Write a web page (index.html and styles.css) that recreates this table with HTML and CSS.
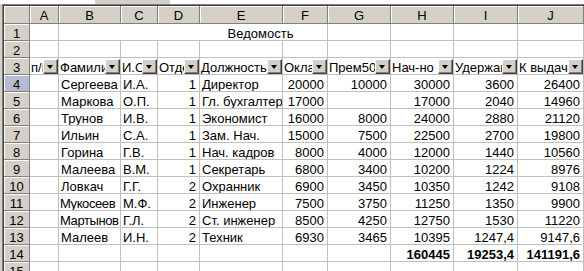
FILE: index.html
```html
<!DOCTYPE html>
<html lang="ru">
<head>
<meta charset="utf-8">
<title>Ведомость</title>
<link rel="stylesheet" href="styles.css">
</head>
<body>
<div class="topbar"><div class="tb-a"></div><div class="tb-b"></div><div class="tb-c"></div></div>
<div class="frame">
<div class="sheet">
  <div class="c hd corner"></div>
  <div class="c hd">A</div><div class="c hd">B</div><div class="c hd">C</div><div class="c hd">D</div><div class="c hd">E</div><div class="c hd">F</div><div class="c hd">G</div><div class="c hd">H</div><div class="c hd">I</div><div class="c hd">J</div><div class="c hd"></div>

  <div class="c rh">1</div>
  <div class="c"></div><div class="c merged">Ведомость</div><div class="c"></div><div class="c"></div><div class="c"></div><div class="c"></div><div class="c"></div>

  <div class="c rh">2</div>
  <div class="c"></div><div class="c"></div><div class="c"></div><div class="c"></div><div class="c"></div><div class="c"></div><div class="c"></div><div class="c"></div><div class="c"></div><div class="c"></div><div class="c"></div>

  <div class="c rh">3</div>
  <div class="c f">п/п<span class="fb"></span></div>
  <div class="c f">Фамилия<span class="fb"></span></div>
  <div class="c f">И.О.<span class="fb"></span></div>
  <div class="c f">Отдел<span class="fb"></span></div>
  <div class="c f">Должность<span class="fb"></span></div>
  <div class="c f">Оклад<span class="fb"></span></div>
  <div class="c f">Прем50%<span class="fb"></span></div>
  <div class="c f">Нач-но<span class="fb"></span></div>
  <div class="c f">Удержано<span class="fb"></span></div>
  <div class="c f">К выдаче<span class="fb"></span></div>
  <div class="c"></div>

  <div class="c rh sel">4</div>
  <div class="c"></div><div class="c">Сергеева</div><div class="c">И.А.</div><div class="c r">1</div><div class="c">Директор</div><div class="c r">20000</div><div class="c r">10000</div><div class="c r">30000</div><div class="c r">3600</div><div class="c r">26400</div><div class="c"></div>

  <div class="c rh">5</div>
  <div class="c"></div><div class="c">Маркова</div><div class="c">О.П.</div><div class="c r">1</div><div class="c">Гл. бухгалтер</div><div class="c r">17000</div><div class="c r"></div><div class="c r">17000</div><div class="c r">2040</div><div class="c r">14960</div><div class="c"></div>

  <div class="c rh">6</div>
  <div class="c"></div><div class="c">Трунов</div><div class="c">И.В.</div><div class="c r">1</div><div class="c">Экономист</div><div class="c r">16000</div><div class="c r">8000</div><div class="c r">24000</div><div class="c r">2880</div><div class="c r">21120</div><div class="c"></div>

  <div class="c rh">7</div>
  <div class="c"></div><div class="c">Ильин</div><div class="c">С.А.</div><div class="c r">1</div><div class="c">Зам. Нач.</div><div class="c r">15000</div><div class="c r">7500</div><div class="c r">22500</div><div class="c r">2700</div><div class="c r">19800</div><div class="c"></div>

  <div class="c rh">8</div>
  <div class="c"></div><div class="c">Горина</div><div class="c">Г.В.</div><div class="c r">1</div><div class="c">Нач. кадров</div><div class="c r">8000</div><div class="c r">4000</div><div class="c r">12000</div><div class="c r">1440</div><div class="c r">10560</div><div class="c"></div>

  <div class="c rh">9</div>
  <div class="c"></div><div class="c">Малеева</div><div class="c">В.М.</div><div class="c r">1</div><div class="c">Секретарь</div><div class="c r">6800</div><div class="c r">3400</div><div class="c r">10200</div><div class="c r">1224</div><div class="c r">8976</div><div class="c"></div>

  <div class="c rh">10</div>
  <div class="c"></div><div class="c">Ловкач</div><div class="c">Г.Г.</div><div class="c r">2</div><div class="c">Охранник</div><div class="c r">6900</div><div class="c r">3450</div><div class="c r">10350</div><div class="c r">1242</div><div class="c r">9108</div><div class="c"></div>

  <div class="c rh">11</div>
  <div class="c"></div><div class="c tight">Мукосеев</div><div class="c">М.Ф.</div><div class="c r">2</div><div class="c">Инженер</div><div class="c r">7500</div><div class="c r">3750</div><div class="c r">11250</div><div class="c r">1350</div><div class="c r">9900</div><div class="c"></div>

  <div class="c rh">12</div>
  <div class="c"></div><div class="c tight">Мартынов</div><div class="c">Г.Л.</div><div class="c r">2</div><div class="c">Ст. инженер</div><div class="c r">8500</div><div class="c r">4250</div><div class="c r">12750</div><div class="c r">1530</div><div class="c r">11220</div><div class="c"></div>

  <div class="c rh">13</div>
  <div class="c"></div><div class="c">Малеев</div><div class="c">И.Н.</div><div class="c r">2</div><div class="c">Техник</div><div class="c r">6930</div><div class="c r">3465</div><div class="c r">10395</div><div class="c r">1247,4</div><div class="c r">9147,6</div><div class="c"></div>

  <div class="c rh">14</div>
  <div class="c"></div><div class="c"></div><div class="c"></div><div class="c"></div><div class="c"></div><div class="c"></div><div class="c"></div><div class="c r b">160445</div><div class="c r b">19253,4</div><div class="c r b">141191,6</div><div class="c"></div>

  <div class="c rh">15</div>
  <div class="c"></div><div class="c"></div><div class="c"></div><div class="c"></div><div class="c"></div><div class="c"></div><div class="c"></div><div class="c"></div><div class="c"></div><div class="c"></div><div class="c"></div>
</div>
</div>
</body>
</html>
```

FILE: styles.css
```css
html, body {
  margin: 0;
  padding: 0;
}
body {
  background: #d4d0c8;
  width: 584px;
  height: 271px;
  overflow: hidden;
  font-family: "Liberation Sans", Arial, sans-serif;
  font-size: 13px;
  color: #000;
}
.topbar {
  height: 4px;
  display: flex;
}
.tb-a { width: 95px; background: #fff; }
.tb-b { width: 75px; background: #d4d0c8; }
.tb-c { flex: 1; background: #fff; }

.frame {
  margin-left: 2px;
  border-top: 1px solid #808080;
  border-left: 1px solid #808080;
}
.sheet {
  border-top: 1px solid #404040;
  border-left: 1px solid #404040;
  background: #fff;
  display: grid;
  grid-template-columns: 26px 29px 62px 37px 42px 83px 45px 63px 63px 64px 66px 1fr;
  grid-template-rows: 18px repeat(15, 17px);
}
.c {
  box-sizing: border-box;
  border-right: 1px solid #c0c0c0;
  border-bottom: 1px solid #c0c0c0;
  padding: 0 3px 0 2px;
  line-height: 19px;
  white-space: nowrap;
  overflow: hidden;
  position: relative;
}
.r { text-align: right; }
.b { font-weight: bold; }
.tight {
  padding-left: 1px;
  padding-right: 0;
  letter-spacing: -0.4px;
}

.hd, .rh {
  background: #d4d0c8;
  border-right-color: #808080;
  border-bottom-color: #808080;
  box-shadow: inset 1px 1px 0 #fff;
  text-align: center;
  padding: 0;
}
.rh.sel { background: #b6bdd2; }
.merged {
  grid-column: span 5;
  text-align: center;
  padding-left: 138px;
}
.f { padding-left: 1px; }
.fb {
  position: absolute;
  right: 0;
  top: 1px;
  width: 15px;
  height: 15px;
  box-sizing: border-box;
  background: #d4d0c8;
  border-top: 1px solid #fff;
  border-left: 1px solid #fff;
  border-right: 1px solid #404040;
  border-bottom: 1px solid #404040;
  box-shadow: inset -1px -1px 0 #808080;
}
.fb::after {
  content: "";
  position: absolute;
  left: 3px;
  top: 5px;
  width: 0;
  height: 0;
  border-left: 3.5px solid transparent;
  border-right: 3.5px solid transparent;
  border-top: 4px solid #000;
}
```
